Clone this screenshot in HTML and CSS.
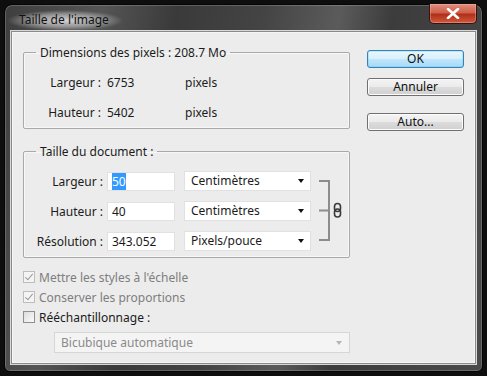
FILE: index.html
```html
<!DOCTYPE html>
<html lang="fr">
<head>
  <meta charset="UTF-8">
  <title>Taille de l'image</title>
  <link rel="stylesheet" href="styles.css">
</head>
<body>
  <div class="window">
    <div class="titlebar">
      <span class="title">Taille de l'image</span>
      <button class="close">
        <svg width="14" height="11" viewBox="0 0 14 11"><path d="M2 1 L12 10 M12 1 L2 10" stroke="#fff" stroke-width="2.6" stroke-linecap="round"/></svg>
      </button>
    </div>
    <div class="client">
      <div class="main">
        <fieldset class="group pixels">
          <legend>Dimensions des pixels : 208.7 Mo</legend>
          <div class="row"><span class="label">Largeur :</span><span class="value">6753</span><span class="unit">pixels</span></div>
          <div class="row"><span class="label">Hauteur :</span><span class="value">5402</span><span class="unit">pixels</span></div>
        </fieldset>

        <fieldset class="group doc">
          <legend>Taille du document :</legend>
          <div class="doc-body">
            <div class="fields">
              <div class="row">
                <span class="label">Largeur :</span>
                <span class="input"><span class="sel">50</span></span>
                <span class="select">Centimètres<span class="arrow"></span></span>
              </div>
              <div class="row">
                <span class="label">Hauteur :</span>
                <span class="input">40</span>
                <span class="select">Centimètres<span class="arrow"></span></span>
              </div>
              <div class="row">
                <span class="label">Résolution :</span>
                <span class="input">343.052</span>
                <span class="select">Pixels/pouce<span class="arrow"></span></span>
              </div>
            </div>
            <svg class="link" width="26" height="80" viewBox="0 0 26 80">
              <path d="M0 10 H10 V69 H0 M0 39.5 H10" fill="none" stroke="#8c8c8c" stroke-width="2"/>
              <rect x="15.5" y="32.5" width="6" height="8" rx="3" fill="none" stroke="#3a3a3a" stroke-width="1.6"/>
              <rect x="15.5" y="38" width="6" height="8" rx="3" fill="none" stroke="#3a3a3a" stroke-width="1.6"/>
            </svg>
          </div>
        </fieldset>

        <div class="checks">
          <label class="check disabled"><span class="box on"></span>Mettre les styles à l'échelle</label>
          <label class="check disabled"><span class="box on"></span>Conserver les proportions</label>
          <label class="check"><span class="box"></span>Rééchantillonnage :</label>
        </div>

        <div class="select wide disabled">Bicubique automatique<span class="arrow"></span></div>
      </div>

      <div class="buttons">
        <button class="btn default">OK</button>
        <button class="btn">Annuler</button>
        <button class="btn auto">Auto...</button>
      </div>
    </div>
  </div>
</body>
</html>
```

FILE: styles.css
```css
body { margin: 0; background: #0e0e0e; font-family: "Noto Sans", "Open Sans", sans-serif; font-size: 12px; color: #1b1b1b; }

.window { margin: 4px 0 0 4px; width: 479px; height: 368px; box-sizing: border-box; border: 1px solid #050505; border-radius: 8px 8px 6px 6px;
  background: linear-gradient(100deg, #3e3e3e 0%, #555 18%, #3a3a3a 32%, #444 48%, #5b5b5b 62%, #3c3c3c 72%, #4a4a4a 100%);
  box-shadow: inset 0 0 0 1px rgba(255,255,255,0.18); display: flex; flex-direction: column; padding: 0 6px 7px 6px; }
.titlebar { height: 26px; display: flex; align-items: flex-start; justify-content: space-between; }
.title { margin: 5px 0 0 -4px; color: #111; padding: 2px 14px 3px 12px; line-height: 16px;
  background: radial-gradient(ellipse closest-side, rgba(225,225,225,0.9) 0%, rgba(205,205,205,0.55) 60%, rgba(200,200,200,0) 100%); }
.close { margin: -1px -1px 0 0; width: 48px; height: 20px; border: 1px solid #3a1010; border-top: none; border-radius: 0 0 5px 5px; padding: 0;
  background: linear-gradient(#e09080 0%, #d0604a 45%, #b0301a 55%, #d05a3c 100%); box-shadow: inset 0 0 0 1px rgba(255,200,190,0.35);
  display: flex; align-items: center; justify-content: center; }

.client { flex: 1; background: #ececec; border: 1px solid #8a8a8a; box-shadow: 0 0 0 1px #d8d8d8, inset 0 0 0 1px #f6f6f6; display: flex; }
.main { margin-left: 11px; width: 327px; display: flex; flex-direction: column; }

.group { margin: 12px 0 0 0; padding: 11px 0 6px 0; border: 1px solid #a9a9a9; border-radius: 2px; box-shadow: inset 0 0 0 1px #f7f7f7; }
.group legend { margin-left: 12px; padding: 0 4px; line-height: 17px; }
.group.doc { margin-top: 14px; }
.row { display: flex; align-items: center; height: 20px; }
.row + .row { margin-top: 10px; }
.label { width: 77px; text-align: right; }
.pixels .value { margin-left: 6px; width: 78px; }
.doc .label { width: 79px; }

.doc-body { display: flex; align-items: flex-start; }
.input { margin-left: 4px; width: 68px; height: 19px; box-sizing: border-box; background: #fff; border: 1px solid #e1e1e1; padding-left: 4px; line-height: 17px; }
.input .sel { background: #3399ff; color: #fff; }
.select { margin-left: 9px; width: 127px; height: 20px; box-sizing: border-box; background: #fff; border: 1px solid #e1e1e1; padding-left: 6px; line-height: 18px; display: flex; justify-content: space-between; align-items: center; }
.arrow { width: 0; height: 0; margin-right: 6px; border-left: 3.5px solid transparent; border-right: 3.5px solid transparent; border-top: 4px solid #111; }
.link { margin-left: 8px; }

.checks { margin-top: 9px; }
.check { display: flex; align-items: center; height: 20px; }
.check.disabled { color: #7e7e7e; }
.box { width: 12px; height: 12px; box-sizing: border-box; border: 1px solid #8e8f8f; background: linear-gradient(135deg, #dcdcdc, #fbfbfb); margin-right: 4px; position: relative; }
.check.disabled .box { border-color: #bdbdbd; background: #f4f4f4; }
.box.on::after { content: ""; position: absolute; left: 3px; top: 0; width: 3px; height: 7px; border: solid #9a9a9a; border-width: 0 1.5px 1.5px 0; transform: rotate(40deg); }

.select.wide { margin: 5px 0 0 31px; width: 296px; height: 21px; color: #8a8a8a; border-color: #d6d6d6; background: #f4f4f4; }
.select.wide .arrow { border-top-color: #b5b5b5; margin-right: 7px; }

.buttons { margin: 18px 0 0 17px; display: flex; flex-direction: column; width: 97px; }
.btn { height: 18px; font: inherit; color: #111; padding: 0; border: 1px solid #707070; border-radius: 3px; line-height: 14px;
  background: linear-gradient(#f4f4f4 0%, #ebebeb 48%, #dcdcdc 52%, #d0d0d0 100%); box-shadow: inset 0 0 0 1px #fcfcfc; }
.btn + .btn { margin-top: 10px; }
.btn.auto { margin-top: 17px; }
.btn.default { border-color: #3c7fb1; background: linear-gradient(#eaf6fd 0%, #d9f0fc 48%, #bee6fd 52%, #a7d9f5 100%); box-shadow: inset 0 0 0 1px #48d8fb55; }
```
